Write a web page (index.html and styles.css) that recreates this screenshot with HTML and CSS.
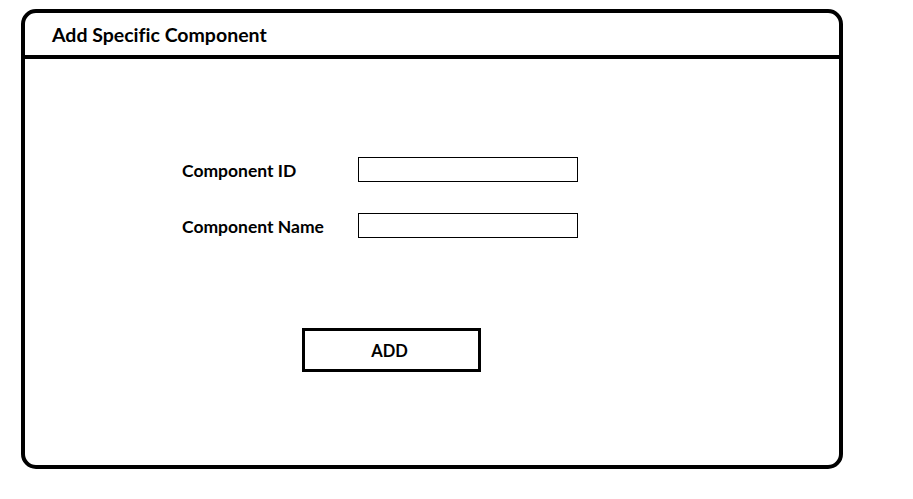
FILE: index.html
```html
<!DOCTYPE html>
<html>
<head>
<meta charset="utf-8">
<link rel="stylesheet" href="styles.css">
</head>
<body>
<div class="card">
  <div class="card-header">Add Specific Component</div>
  <div class="card-body">
    <div class="form">
      <label class="label">Component ID</label>
      <div class="input"></div>
      <label class="label">Component Name</label>
      <div class="input"></div>
    </div>
    <button class="btn">ADD</button>
  </div>
</div>
</body>
</html>
```
FILE: styles.css
```css
html, body {
  margin: 0;
  padding: 0;
  background: #fff;
}
body {
  font-family: Lato, "Open Sans", "Liberation Sans", sans-serif;
  font-variant-ligatures: none;
  color: #000;
}
.card {
  box-sizing: border-box;
  margin: 9px 0 0 21px;
  width: 822px;
  height: 460px;
  border: 4px solid #000;
  border-radius: 15px;
}
.card-header {
  box-sizing: border-box;
  height: 46px;
  border-bottom: 4px solid #000;
  padding-left: 27px;
  display: flex;
  align-items: center;
  font-weight: bold;
  font-size: 19.5px;
}
.card-body {
  padding: 98px 0 0 157px;
}
.form {
  display: grid;
  grid-template-columns: 176px 220px;
  row-gap: 31px;
  align-items: center;
}
.label {
  font-weight: bold;
  font-size: 17.5px;
  line-height: 1;
  padding-top: 2px;
}
.input {
  box-sizing: border-box;
  height: 25px;
  border: 1px solid #000;
}
.btn {
  display: block;
  box-sizing: border-box;
  margin: 90px 0 0 120px;
  width: 179px;
  height: 44px;
  border: 3px solid #000;
  background: #fff;
  font-family: inherit;
  font-weight: bold;
  font-size: 16.5px;
  color: #000;
  padding: 2px 4px 0 0;
}
```
